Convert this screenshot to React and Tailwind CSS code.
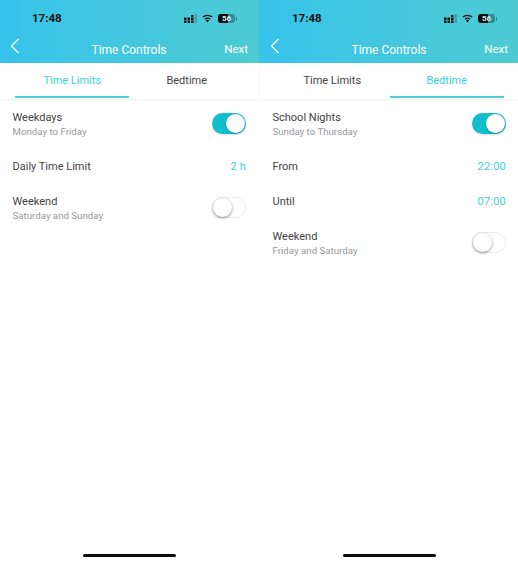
function Signal() {
  return (
    <svg width="13" height="9" viewBox="0 0 13 9" className="block">
      <g fill="#111">
        <rect x="0" y="3.5" width="2.5" height="2.5" />
        <rect x="0" y="6.5" width="2.5" height="2.5" />
        <rect x="3.5" y="3.5" width="2.5" height="2.5" />
        <rect x="3.5" y="6.5" width="2.5" height="2.5" />
        <rect x="7" y="1" width="2.5" height="2.5" />
        <rect x="7" y="4" width="2.5" height="2" />
        <rect x="7" y="6.5" width="2.5" height="2.5" />
      </g>
      <rect x="10.5" y="0" width="2.5" height="9" fill="#111" opacity="0.22" />
    </svg>
  );
}

function Wifi() {
  return (
    <svg width="11" height="9" viewBox="0 0 13 10" className="block">
      <path d="M6.5 9.6 4.6 7.4a2.9 2.9 0 0 1 3.8 0Z" fill="#111" />
      <path d="M3.5 5.9a4.6 4.6 0 0 1 6 0" fill="none" stroke="#111" strokeWidth="1.5" />
      <path d="M1 3.3a8.4 8.4 0 0 1 11 0" fill="none" stroke="#111" strokeWidth="1.6" />
    </svg>
  );
}

function Battery() {
  return (
    <div className="flex items-center">
      <div className="relative flex h-[9px] w-[17px] items-center justify-center overflow-hidden rounded-[3px] bg-[#2f8f99]">
        <div className="absolute left-0 top-0 h-full w-[10px] bg-[#0d0d0d]" />
        <span className="relative text-[8px] font-bold leading-none text-[#d8eef0]">56</span>
      </div>
      <div className="ml-[1px] h-[4px] w-[1px] bg-[#2f8f99]" />
    </div>
  );
}

function Toggle({ on }) {
  if (on) {
    return (
      <div className="flex h-[21px] w-[34px] items-center justify-end rounded-full bg-[#10bfcc] pr-[1px] shadow-[0_1px_2px_rgba(0,0,0,0.12)]">
        <div className="h-[19px] w-[19px] rounded-full bg-white shadow-[0_1px_2px_rgba(0,0,0,0.25)]" />
      </div>
    );
  }
  return (
    <div className="flex h-[21px] w-[34px] items-center rounded-full border border-[#ececf0] bg-white">
      <div className="h-[19px] w-[19px] rounded-full bg-white shadow-[0_1px_3px_rgba(0,0,0,0.45)]" />
    </div>
  );
}

function Row({ title, sub, value, toggle }) {
  return (
    <div className={`flex items-center justify-between pl-[12.5px] pr-[13px] ${sub ? "h-[49px]" : "h-[35px]"}`}>
      <div className={sub ? "pt-[2px]" : "pt-[3px]"}>
        <div className="text-[11px] leading-[14px] text-[#434345]">{title}</div>
        {sub && <div className="text-[9.7px] leading-[14px] text-[#98989c]">{sub}</div>}
      </div>
      {value && <div className="pt-[3px] text-[11px] tracking-[0.2px] text-[#3ccfe0]">{value}</div>}
      {toggle !== undefined && <Toggle on={toggle} />}
    </div>
  );
}

function Tab({ label, active }) {
  return (
    <div className="flex flex-1 flex-col items-center">
      <div className={`flex h-[33px] items-center pt-[4px] text-[11px] ${active ? "text-[#3ccfe0]" : "text-[#434345]"}`}>{label}</div>
      <div className={`h-[2px] w-[114px] ${active ? "bg-[#4fd0de]" : "bg-transparent"}`} />
    </div>
  );
}

function Phone({ active, rows }) {
  return (
    <div className="flex h-[562px] w-[259px] shrink-0 flex-col bg-white">
      <div className="h-[63px] bg-gradient-to-r from-[#36c3ea] to-[#4ecbd2]">
        <div className="flex h-[36px] items-center justify-between pl-[32px] pr-[22px] pt-[1px]">
          <span className="text-[11.5px] font-bold text-[#111]">17:48</span>
          <div className="flex items-center gap-[5px]">
            <Signal />
            <Wifi />
            <Battery />
          </div>
        </div>
        <div className="grid h-[27px] grid-cols-[1fr_auto_1fr] items-center pl-[10px] pr-[11px] text-white">
          <svg width="10" height="16" viewBox="0 0 10 16" className="mb-[7px] block">
            <path d="M8.5 1 1.5 8l7 7" fill="none" stroke="white" strokeWidth="1.2" />
          </svg>
          <span className="text-[12px]">Time Controls</span>
          <span className="justify-self-end text-[11.5px]">Next</span>
        </div>
      </div>
      <div className="z-10 flex h-[36px] bg-white px-[15px] shadow-[0_1px_3px_rgba(0,0,0,0.06)]">
        <Tab label="Time Limits" active={active === 0} />
        <Tab label="Bedtime" active={active === 1} />
      </div>
      <div className="flex-1">
        {rows.map((r) => <Row key={r.title} {...r} />)}
      </div>
      <div className="flex justify-center pb-[5px]">
        <div className="h-[3px] w-[93px] rounded-full bg-[#0a0a0a]" />
      </div>
    </div>
  );
}

export default function App() {
  return (
    <div className="flex h-[562px] w-[518px] overflow-hidden bg-white font-['Roboto',sans-serif]">
      <Phone
        active={0}
        rows={[
          { title: "Weekdays", sub: "Monday to Friday", toggle: true },
          { title: "Daily Time Limit", value: "2 h" },
          { title: "Weekend", sub: "Saturday and Sunday", toggle: false },
        ]}
      />
      <div className="h-[562px] w-[259px] shrink-0 overflow-hidden bg-[linear-gradient(#36c3ea_63px,white_63px)]">
        <div className="ml-[1px]">
          <Phone
            active={1}
            rows={[
              { title: "School Nights", sub: "Sunday to Thursday", toggle: true },
              { title: "From", value: "22:00" },
              { title: "Until", value: "07:00" },
              { title: "Weekend", sub: "Friday and Saturday", toggle: false },
            ]}
          />
        </div>
      </div>
    </div>
  );
}
